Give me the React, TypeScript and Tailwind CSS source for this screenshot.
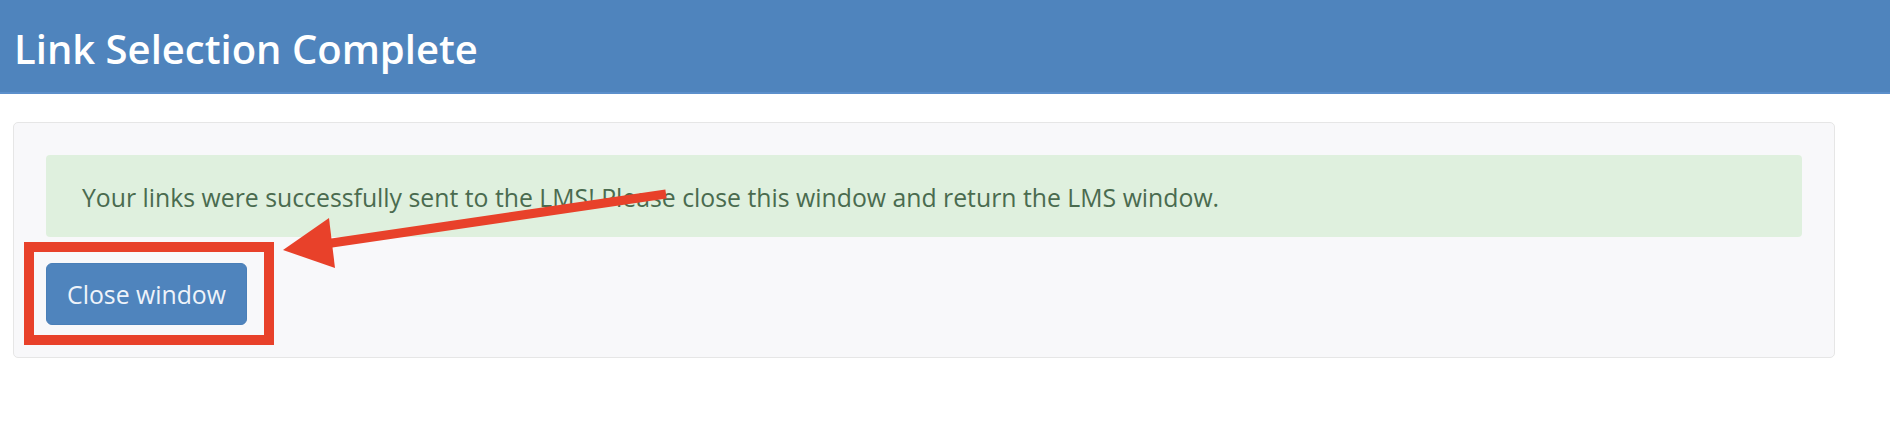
import React from 'react';

const font = { fontFamily: '"Open Sans", "Noto Sans", sans-serif' };

const Annotation: React.FC = () => (
  <svg className="absolute left-0 top-0 pointer-events-none" width="1890" height="440" viewBox="0 0 1890 440">
    <rect x="29" y="247" width="240" height="93" fill="none" stroke="#e8412a" strokeWidth="10" />
    <line x1="666" y1="194" x2="325" y2="244" stroke="#e8412a" strokeWidth="9" />
    <polygon points="283,250 329,218 335,268" fill="#e8412a" />
  </svg>
);

const App: React.FC = () => {
  return (
    <div className="relative w-[1890px] h-[440px] bg-white overflow-hidden" style={font}>
      <header className="h-[94px] bg-[#4f84bd] border-b-2 border-[#5b8fcb] flex items-center px-[14px]">
        <h1 className="text-white text-[40px] font-semibold leading-none mt-[6px]">Link Selection Complete</h1>
      </header>

      <div className="pt-[28px] pl-[13px]">
        <div className="w-[1822px] h-[236px] bg-[#f8f8fa] border border-[#e6e6e6] rounded-[5px] p-[32px] flex flex-col gap-[26px]">
          <div className="h-[82px] bg-[#dff0de] rounded-[4px] flex items-center px-[36px]">
            <p className="text-[#4a6b4f] text-[24.8px] leading-none mt-[2px]">
              Your links were successfully sent to the LMS! Please close this window and return the LMS window.
            </p>
          </div>
          <div>
            <button className="w-[201px] h-[62px] bg-[#4f84bd] text-[#eef3fa] text-[24.8px] leading-none rounded-[6px] border border-[#4a7fb8]">
              Close window
            </button>
          </div>
        </div>
      </div>

      <Annotation />
    </div>
  );
};

export default App;
